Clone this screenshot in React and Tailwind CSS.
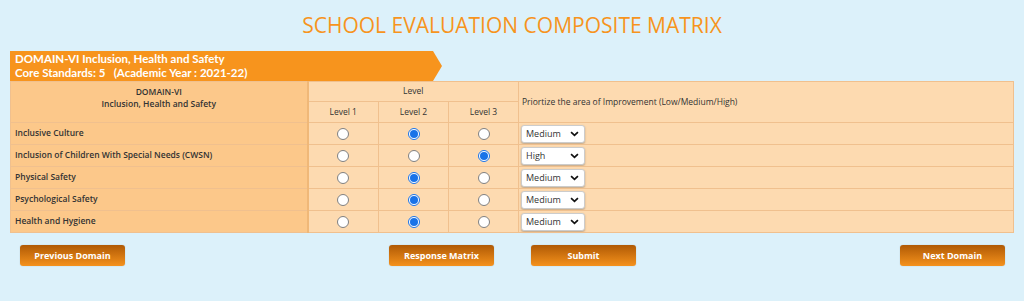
import React from "react";

const rows = [
  { name: "Inclusive Culture", level: 2, priority: "Medium" },
  { name: "Inclusion of Children With Special Needs (CWSN)", level: 3, priority: "High" },
  { name: "Physical Safety", level: 2, priority: "Medium" },
  { name: "Psychological Safety", level: 2, priority: "Medium" },
  { name: "Health and Hygiene", level: 2, priority: "Medium" },
];

function Radio({ checked }) {
  return (
    <span className="inline-block align-middle">
      {checked ? (
        <span className="flex h-[12px] w-[12px] items-center justify-center rounded-full border border-[#1a73e8] bg-white">
          <span className="h-[8px] w-[8px] rounded-full bg-[#1a73e8]" />
        </span>
      ) : (
        <span className="block h-[12px] w-[12px] rounded-full border border-[#808080] bg-white" />
      )}
    </span>
  );
}

function Select({ value }) {
  return (
    <div className="flex h-[18px] w-[64px] items-center justify-between rounded-[3px] border border-[#ccc] bg-white pl-[4px] pr-[5px] text-[9px] text-[#333] shadow-[0_1px_2px_rgba(0,0,0,0.25)]">
      <span>{value}</span>
      <svg width="9" height="6" viewBox="0 0 10 7">
        <path d="M1 1.2 L5 5 L9 1.2" fill="none" stroke="#111" strokeWidth="2" />
      </svg>
    </div>
  );
}

function Btn({ children }) {
  return (
    <button className="block h-[21px] w-[105px] rounded-[3px] bg-gradient-to-b from-[#b05a05] to-[#f5921c] text-[9px] font-bold text-white shadow-[0_0_1px_rgba(0,0,0,0.3)]">
      {children}
    </button>
  );
}

export default function App() {
  return (
    <div className="min-h-[301px] bg-[#dcf1fa] font-['Open_Sans',sans-serif]">
      {/* Title */}
      <h1 className="pt-[11px] text-center text-[21px] leading-[28px] text-[#f7941d]">
        SCHOOL EVALUATION COMPOSITE MATRIX
      </h1>

      <div className="mx-[10px] mt-[12px]">
        {/* Domain banner */}
        <div className="flex h-[30px] w-[432px]">
          <div className="flex-1 bg-[#f7941d] pl-[5px] pt-[1px] font-['Lato',sans-serif] text-[11.5px] font-bold leading-[14px] text-white">
            <div>DOMAIN-VI Inclusion, Health and Safety</div>
            <div className="whitespace-pre">Core Standards: 5   (Academic Year : 2021-22)</div>
          </div>
          <svg width="9" height="30" viewBox="0 0 9 30" className="shrink-0">
            <polygon points="0,0 0,30 9,15" fill="#f7941d" />
          </svg>
        </div>

        {/* Matrix */}
        <table className="w-full border-collapse border border-[#f0c08e] text-[8.5px] text-[#333]">
          <thead>
            <tr className="h-[20px]">
              <th
                rowSpan={2}
                className="w-[297px] border-r-2 border-[#f0b878] bg-[#fcc88a] pt-[4px] align-top font-semibold leading-[12px]"
              >
                <div>DOMAIN-VI</div>
                <div>Inclusion, Health and Safety</div>
              </th>
              <th colSpan={3} className="border border-[#f0c08e] bg-[#fddab0] font-normal">
                Level
              </th>
              <th rowSpan={2} className="border border-[#f0c08e] bg-[#fddab0] pl-[3px] text-left font-normal">
                Priortize the area of Improvement (Low/Medium/High)
              </th>
            </tr>
            <tr className="h-[21px]">
              <th className="w-[71px] border border-[#f0c08e] bg-[#fddab0] font-normal">Level 1</th>
              <th className="w-[70px] border border-[#f0c08e] bg-[#fddab0] font-normal">Level 2</th>
              <th className="w-[70px] border border-[#f0c08e] bg-[#fddab0] font-normal">Level 3</th>
            </tr>
          </thead>
          <tbody>
            {rows.map((r) => (
              <tr key={r.name} className="h-[22px]">
                <td className="border border-r-2 border-[#f0c08e] border-r-[#f0b878] bg-[#fcc88a] pl-[4px] font-semibold">
                  {r.name}
                </td>
                {[1, 2, 3].map((l) => (
                  <td key={l} className="border border-[#f0c08e] bg-[#fddab0] text-center leading-none">
                    <Radio checked={r.level === l} />
                  </td>
                ))}
                <td className="border border-[#f0c08e] bg-[#fddab0] pl-[2px]">
                  <Select value={r.priority} />
                </td>
              </tr>
            ))}
          </tbody>
        </table>

        {/* Actions */}
        <div className="mt-[12px] flex">
          <div className="ml-[10px]">
            <Btn>Previous Domain</Btn>
          </div>
          <div className="ml-[264px]">
            <Btn>Response Matrix</Btn>
          </div>
          <div className="ml-[37px]">
            <Btn>Submit</Btn>
          </div>
          <div className="ml-auto mr-[9px]">
            <Btn>Next Domain</Btn>
          </div>
        </div>
      </div>
    </div>
  );
}
